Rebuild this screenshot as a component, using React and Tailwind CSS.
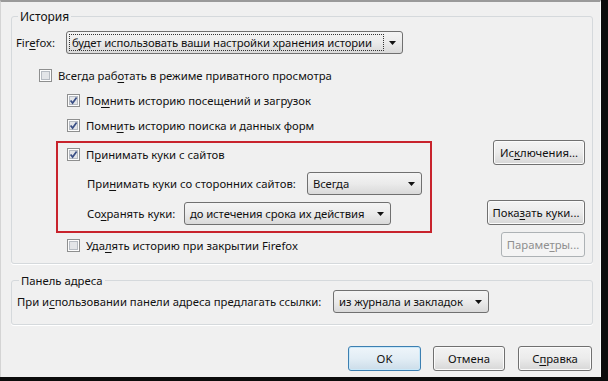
import React from "react";

function U({ children }) {
  return <span className="underline underline-offset-[2px] decoration-[1px]">{children}</span>;
}

function Check({ checked }) {
  return (
    <svg width="13" height="13" viewBox="0 0 13 13" className="shrink-0">
      <rect x="0.5" y="0.5" width="12" height="12" fill="#fdfdfd" stroke="#8e8f8f" />
      <rect x="2.5" y="2.5" width="8" height="8" fill="#e3e5e8" stroke="#b6bbc2" />
      {checked && (
        <path d="M3.6 6.4 L5.6 9 L9.6 3.4" fill="none" stroke="#3a4f86" strokeWidth="1.7" />
      )}
    </svg>
  );
}

function Arrow() {
  return (
    <svg width="7" height="4" viewBox="0 0 7 4" className="shrink-0">
      <path d="M0 0 H7 L3.5 4 Z" fill="#111" />
    </svg>
  );
}

function Select({ children, className, focus }) {
  return (
    <div
      className={`h-[23px] shrink-0 rounded-[3px] border border-[#707070] bg-gradient-to-b from-[#f4f4f4] via-[#ebebeb] to-[#d9d9d9] flex items-center pl-[2px] pr-[6px] ${className}`}
    >
      <div
        className={`flex-1 h-[17px] flex items-center pl-[2px] mr-[5px] overflow-hidden tracking-[-0.1px] ${focus ? "border border-dotted border-[#333]" : "border border-transparent"}`}
      >
        {children}
      </div>
      <Arrow />
    </div>
  );
}

function Btn({ children, className, disabled, def }) {
  const look = def
    ? "border-[#3c7fb1] bg-gradient-to-b from-[#eef5fa] via-[#e2edf5] to-[#ccdde9] shadow-[inset_0_0_0_1px_#c9e8f9]"
    : disabled
    ? "border-[#adb2b5] bg-[#f4f4f4] text-[#8f8f8f]"
    : "border-[#707070] bg-gradient-to-b from-[#f3f3f3] via-[#ebebeb] to-[#d7d7d7] shadow-[inset_0_0_0_1px_#fbfbfb]";
  return (
    <div
      className={`h-[25px] shrink-0 flex items-center justify-center rounded-[3px] border ${look} ${className}`}
    >
      {children}
    </div>
  );
}

function CheckRow({ checked, children, className }) {
  return (
    <div className={`h-[17px] flex items-center gap-[6px] ${className}`}>
      <Check checked={checked} />
      <span>{children}</span>
    </div>
  );
}

export default function App() {
  return (
    <div className="w-[608px] h-[381px] bg-[#0c0c0c] flex flex-col font-['Noto_Sans',sans-serif] text-[11.3px] leading-[17px] text-[#111] whitespace-nowrap">
      <div className="w-[601px] h-[377px] bg-[#f0f0f0] border-t-[2px] border-t-[#9a9a9a] border-l border-l-[#d4d4d4] border-r border-r-[#fbfbfb] flex flex-col pl-[10px] pr-[7px]">
        <fieldset className="mt-[6px] border border-[#d5d9dc] rounded-[3px] shadow-[0_1px_0_#fff] pb-[6px] pl-[4px] pr-[7px]">
          <legend className="ml-[2px] px-[2px] text-[12px]">История</legend>
          <div className="mt-[6px] h-[23px] flex items-center">
            <span className="w-[50px] shrink-0">
              Fir<U>e</U>fox:
            </span>
            <Select className="w-[337px]" focus>
              будет использовать ваши настройки хранения истории
            </Select>
          </div>
          <CheckRow className="mt-[13px] ml-[23px]">
            Всегда раб<U>о</U>тать в режиме приватного просмотра
          </CheckRow>
          <CheckRow checked className="mt-[8px] ml-[51px]">
            По<U>м</U>нить историю посещений и загрузок
          </CheckRow>
          <CheckRow checked className="mt-[8px] ml-[51px]">
            Помн<U>и</U>ть историю поиска и данных форм
          </CheckRow>
          <div className="mt-[6px] flex items-start">
            <div className="flex flex-col">
              <div className="mt-[1px] ml-[40px] w-[376px] h-[92px] border-[2px] border-[#c8232c] pl-[9px] pt-[1px]">
                <div className="h-[20px] flex items-center gap-[6px]">
                  <Check checked />
                  <span>
                    П<U>р</U>инимать куки с сайтов
                  </span>
                </div>
                <div className="mt-[8px] h-[23px] flex items-center pl-[20px]">
                  <span className="w-[220px] shrink-0">
                    При<U>н</U>имать куки со сторонних сайтов:
                  </span>
                  <Select className="w-[115px]">Всегда</Select>
                </div>
                <div className="mt-[7px] h-[23px] flex items-center pl-[20px]">
                  <span className="w-[97px] shrink-0">
                    Со<U>х</U>ранять куки:
                  </span>
                  <Select className="w-[207px]">до истечения срока их действия</Select>
                </div>
              </div>
              <CheckRow className="mt-[4px] ml-[51px]">
                Уда<U>л</U>ять историю при закрытии Firefox
              </CheckRow>
            </div>
            <div className="ml-auto flex flex-col items-end">
              <Btn className="w-[92px]">
                Ис<U>к</U>лючения...
              </Btn>
              <Btn className="mt-[35px] w-[98px]">
                Пока<U>з</U>ать куки...
              </Btn>
              <Btn disabled className="mt-[7px] w-[84px]">
                Параме<U>т</U>ры...
              </Btn>
            </div>
          </div>
        </fieldset>

        <fieldset className="mt-[8px] border border-[#d5d9dc] rounded-[3px] shadow-[0_1px_0_#fff] pb-[11px] pl-[5px] pr-[7px]">
          <legend className="ml-[2px] px-[2px]">Панель адреса</legend>
          <div className="mt-[1px] h-[23px] flex items-center">
            <span className="w-[316px] shrink-0">
              При и<U>с</U>пользовании панели адреса предлагать ссылки:
            </span>
            <Select className="w-[156px]">из журнала и закладок</Select>
          </div>
        </fieldset>

        <div className="mt-[21px] flex justify-end gap-[12px] pr-[1px]">
          <Btn def className="w-[73px]">
            OK
          </Btn>
          <Btn className="w-[72px]">Отмена</Btn>
          <Btn className="w-[74px] ml-[1px]">
            С<U>п</U>равка
          </Btn>
        </div>
      </div>
    </div>
  );
}
